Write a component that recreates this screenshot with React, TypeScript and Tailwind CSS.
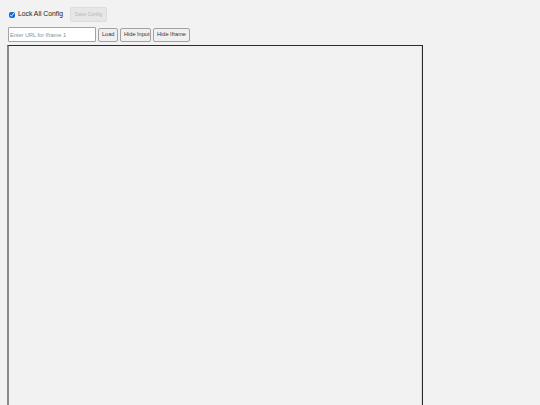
import { useState } from 'react'

export default function App() {
  const [locked, setLocked] = useState(true)
  const [url, setUrl] = useState('')

  const btn =
    'h-[14px] px-[3px] bg-[#f0f0f0] border border-[#a3a3a3] rounded-[2px] text-[5.6px] leading-none text-[#333] whitespace-nowrap'

  return (
    <div className="h-[405px] w-[540px] overflow-hidden bg-[#f2f2f2] font-['Liberation_Sans',Arial,sans-serif]">
      <div className="flex items-center h-[15px] mt-[7px] pl-[9px]">
        <label className="flex items-center gap-[3px] text-[6.8px] text-[#222] whitespace-nowrap">
          <input
            type="checkbox"
            checked={locked}
            onChange={e => setLocked(e.target.checked)}
            className="w-[6px] h-[6px] m-0 accent-[#0b6ed6]"
          />
          Lock All Config
        </label>
        <button
          disabled
          className="ml-[7px] h-[15px] w-[37px] bg-[#e6e6e6] border border-[#dcdcdc] rounded-[2px] text-[5px] text-[#b8b8b8] whitespace-nowrap"
        >
          Save Config
        </button>
      </div>

      <div className="flex items-center gap-[2px] mt-[5px] pl-[8px] h-[15px]">
        <input
          value={url}
          onChange={e => setUrl(e.target.value)}
          placeholder="Enter URL for Iframe 1"
          className="w-[88px] h-[15px] bg-white border border-[#a3a3a3] rounded-[1px] px-[1px] text-[5.6px] placeholder:text-[#8e8e8e] outline-none"
        />
        <button className={`${btn} w-[20px]`}>Load</button>
        <button className={`${btn} w-[31px]`}>Hide Input</button>
        <button className={`${btn} w-[37px]`}>Hide Iframe</button>
      </div>

      <div className="mt-[3px] ml-[7px] w-[416px] h-[400px] border-t border-r border-[#2b2b2b] border-l-2 border-l-[#8a8a8a]">
        <div className="h-full border-r border-[#dcdcdc] bg-[#f2f2f2]" />
      </div>
    </div>
  )
}
